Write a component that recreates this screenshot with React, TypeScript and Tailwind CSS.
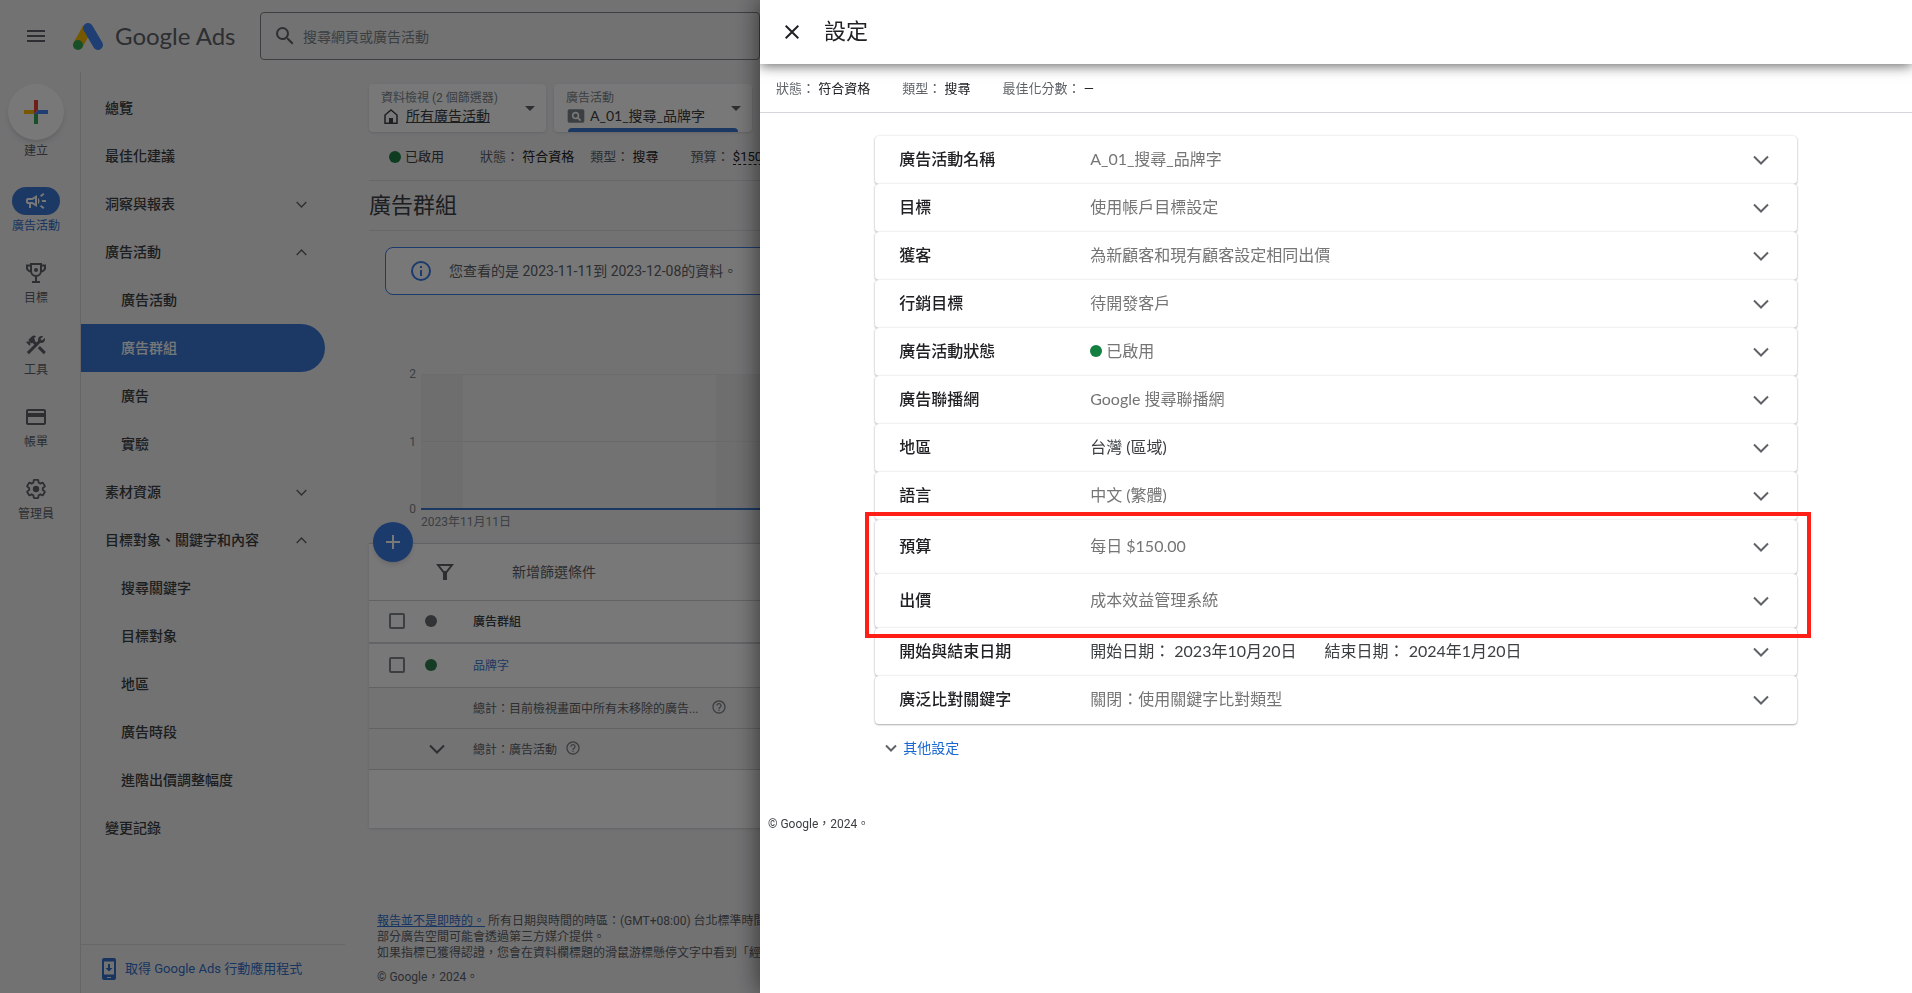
import { ReactNode } from 'react'
import {
    MdAdd,
    MdArrowDropDown,
    MdClose,
    MdConstruction,
    MdCreditCard,
    MdHelpOutline,
    MdMenu,
    MdOutlineCampaign,
    MdPageview,
    MdSearch
} from 'react-icons/md'

type NavItem = {
    label: string
    child?: boolean
    active?: boolean
    chevron?: 'up' | 'down'
}

const NAV: NavItem[] = [
    { label: '總覽' },
    { label: '最佳化建議' },
    { label: '洞察與報表', chevron: 'down' },
    { label: '廣告活動', chevron: 'up' },
    { label: '廣告活動', child: true },
    { label: '廣告群組', child: true, active: true },
    { label: '廣告', child: true },
    { label: '實驗', child: true },
    { label: '素材資源', chevron: 'down' },
    { label: '目標對象、關鍵字和內容', chevron: 'up' },
    { label: '搜尋關鍵字', child: true },
    { label: '目標對象', child: true },
    { label: '地區', child: true },
    { label: '廣告時段', child: true },
    { label: '進階出價調整幅度', child: true },
    { label: '變更記錄' }
]

type Setting = {
    label: string
    value: ReactNode
    dark?: boolean
}

const SETTINGS_TOP: Setting[] = [
    { label: '廣告活動名稱', value: 'A_01_搜尋_品牌字' },
    { label: '目標', value: '使用帳戶目標設定' },
    { label: '獲客', value: '為新顧客和現有顧客設定相同出價' },
    { label: '行銷目標', value: '待開發客戶' },
    {
        label: '廣告活動狀態',
        value: (
            <span className="flex items-center gap-1">
                <span className="size-3 rounded-full bg-[#137f41]" />
                已啟用
            </span>
        )
    },
    { label: '廣告聯播網', value: 'Google 搜尋聯播網' },
    { label: '地區', value: '台灣 (區域)', dark: true },
    { label: '語言', value: '中文 (繁體)' }
]

const SETTINGS_MARKED: Setting[] = [
    { label: '預算', value: '每日 $150.00' },
    { label: '出價', value: '成本效益管理系統' }
]

const SETTINGS_BOTTOM: Setting[] = [
    {
        label: '開始與結束日期',
        dark: true,
        value: (
            <span className="flex gap-7">
                <span>開始日期： 2023年10月20日</span>
                <span>結束日期： 2024年1月20日</span>
            </span>
        )
    },
    { label: '廣泛比對關鍵字', value: '關閉：使用關鍵字比對類型' }
]

function Chevron({ up = false, className = '' }: { up?: boolean, className?: string }) {
    return (
        <svg viewBox="0 0 16 10" fill="none" stroke="currentColor" strokeWidth="2" className={className}>
            <path d={up ? 'M1 8.5 8 1.5 15 8.5' : 'M1 1.5 8 8.5 15 1.5'} />
        </svg>
    )
}

function AdsLogo() {
    return (
        <svg viewBox="0 0 30 27" className="h-[27px] w-[30px]">
            <path d="M5 22 14.5 5" stroke="#fbbc04" strokeWidth="10" />
            <path d="M15 5 25 22" stroke="#4285f4" strokeWidth="10" strokeLinecap="round" />
            <circle cx="5" cy="22" r="5" fill="#34a853" />
        </svg>
    )
}

function TrophyIcon() {
    return (
        <svg viewBox="0 0 20 20" fill="none" stroke="currentColor" strokeWidth="2" className="size-5">
            <path d="M5 1h10v7a5 5 0 0 1-10 0zM5 2.500H1V4a4 4 0 0 0 4 4.500M15 2.500h4V4a4 4 0 0 1-4 4.500M10 13v6M6 19h8" />
            <circle cx="10" cy="7" r="2" fill="currentColor" stroke="none" />
        </svg>
    )
}

function SettingsIcon() {
    return (
        <svg viewBox="1 1 22 22" fill="none" stroke="currentColor" strokeWidth="2" className="size-5">
            <path d="M19.430 12.980c.04-.32.07-.64.07-.98s-.03-.66-.07-.98l2.110-1.650c.19-.15.24-.42.12-.64l-2-3.460c-.09-.16-.26-.25-.44-.25-.06 0-.12.01-.17.03l-2.490 1c-.52-.4-1.080-.73-1.690-.98l-.38-2.650C14.460 2.180 14.250 2 14 2h-4c-.25 0-.46.18-.49.42l-.38 2.650c-.61.25-1.170.59-1.690.98l-2.490-1c-.06-.02-.12-.03-.18-.03-.17 0-.34.09-.43.25l-2 3.460c-.13.22-.07.49.12.64l2.110 1.650c-.04.32-.07.65-.07.98s.03.66.07.98l-2.110 1.650c-.19.15-.24.42-.12.64l2 3.460c.09.16.26.25.44.25.06 0 .12-.01.17-.03l2.490-1c.52.4 1.080.73 1.690.98l.38 2.650c.03.24.24.42.49.42h4c.25 0 .46-.18.49-.42l.38-2.650c.61-.25 1.170-.59 1.690-.98l2.490 1c.06.02.12.03.18.03.17 0 .34-.09.43-.25l2-3.460c.12-.22.07-.49-.12-.64z" />
            <circle cx="12" cy="12" r="3.500" fill="currentColor" stroke="none" />
        </svg>
    )
}

function RailItem({ icon, label }: { icon: ReactNode, label: string }) {
    return (
        <a href="#" className="flex h-[72px] flex-col items-center text-[#5f6368]">
            <span className="flex h-7 items-center">{icon}</span>
            <span className="mt-[3px] text-xs leading-4">{label}</span>
        </a>
    )
}

function SideNav() {
    return (
        <nav className="flex w-[264px] shrink-0 flex-col">
            <ul className="pt-3">
                {NAV.map((item, i) => (
                    <li key={i}>
                        <a
                            href="#"
                            className={`flex h-12 w-[244px] items-center justify-between pr-[18px] text-sm font-medium ${item.child ? 'pl-10' : 'pl-6'
                                } ${item.active ? 'rounded-r-full bg-[#3b7ad4] text-white' : 'text-[#3c4043]'}`}
                        >
                            {item.label}
                            {item.chevron && <Chevron up={item.chevron === 'up'} className="h-[7px] w-[11px] text-[#5f6368]" />}
                        </a>
                    </li>
                ))}
            </ul>
            <a href="#" className="mt-auto flex h-[49px] items-center gap-[9px] border-t border-[#dadce0] pl-[21px] text-[13px] text-[#3470cc]">
                <svg viewBox="0 0 14 22" className="h-[22px] w-[14px]">
                    <rect width="14" height="22" rx="2" fill="currentColor" />
                    <path d="M2 3.500h10v13H2z" fill="#f2f2f5" />
                    <path d="M6 6h2v4h2.500L7 13.500 3.500 10H6z" fill="currentColor" />
                    <path d="M5 19h4v1H5z" fill="#f2f2f5" />
                </svg>
                取得 Google Ads 行動應用程式
            </a>
        </nav>
    )
}

function Scope() {
    return (
        <div className="flex gap-2">
            <button className="flex h-12 w-[177px] items-center justify-between rounded bg-white pr-1 pl-3 text-left shadow">
                <span className="text-xs leading-4 text-[#80868b]">
                    資料檢視 (2 個篩選器)
                    <span className="flex items-center gap-2 text-sm leading-5 text-[#3c4043]">
                        <svg viewBox="0 0 14 15" fill="none" stroke="currentColor" strokeWidth="1.500" className="ml-[3px] h-[15px] w-[14px]">
                            <path d="M1 14.200V6L7 1l6 5v8.200z" />
                            <path d="M5 9h4v5H5z" fill="currentColor" stroke="none" />
                        </svg>
                        <span className="underline">所有廣告活動</span>
                    </span>
                </span>
                <MdArrowDropDown className="size-6 text-[#5f6368]" />
            </button>
            <button className="relative flex h-12 w-[198px] items-center justify-between rounded bg-white pr-1 pl-3 text-left shadow">
                <span className="text-xs leading-4 text-[#80868b]">
                    廣告活動
                    <span className="flex items-center gap-1 text-sm leading-5 text-[#3c4043]">
                        <MdPageview className="size-5 text-[#80868b]" />
                        <span className="font-[Lato,'Noto_Sans_CJK_TC',sans-serif]">A_01_搜尋_品牌字</span>
                    </span>
                </span>
                <MdArrowDropDown className="size-6 text-[#5f6368]" />
                <span className="absolute bottom-0 left-[14px] h-1 w-[170px] rounded-t bg-[#3b78d2]" />
            </button>
        </div>
    )
}

function Chart() {
    return (
        <div className="mt-[71px] flex pl-8">
            <div className="flex h-[151px] w-5 flex-col justify-between pr-[5px] text-right text-xs leading-4 text-[#80868b]">
                <span>2</span>
                <span>1</span>
                <span>0</span>
            </div>
            <div className="flex-1 pt-2">
                <div className="flex h-[136px] flex-col border-t border-b-2 border-t-[#e6e6e9] border-b-[#3b78d2]">
                    <div className="flex flex-1">
                        <div className="w-[42px] bg-[#e9e9eb]" />
                        <div className="w-[253px]" />
                        <div className="w-[84px] bg-[#e9e9eb]" />
                    </div>
                    <div className="flex flex-1 border-t border-[#e0e0e4]">
                        <div className="w-[42px] bg-[#e9e9eb]" />
                        <div className="w-[253px]" />
                        <div className="w-[84px] bg-[#e9e9eb]" />
                    </div>
                </div>
                <p className="mt-1 text-xs leading-4 text-[#80868b]">2023年11月11日</p>
            </div>
        </div>
    )
}

function Check({ label }: { label: string }) {
    return (
        <input
            type="checkbox"
            aria-label={label}
            className="block size-4 appearance-none rounded-xs border-2 border-[#80868b]"
        />
    )
}

function GroupTable() {
    return (
        <section className="relative mt-[13px] h-[285px] border-t border-[#d0d1d6] bg-white shadow">
            <button aria-label="新增" className="absolute -top-[22px] left-1 flex size-10 items-center justify-center rounded-full bg-[#3b7ee6] text-white shadow-md">
                <MdAdd className="size-6" />
            </button>
            <div className="flex h-14 items-center pl-[67px] text-sm text-[#5f6368]">
                <svg viewBox="0 0 18 18" fill="none" stroke="currentColor" strokeWidth="2" className="size-[18px]">
                    <path d="M2 2h14l-5.500 7h-3z" />
                    <path d="M9 9v8" strokeWidth="4" />
                </svg>
                <button className="ml-[58px]">新增篩選條件</button>
            </div>
            <table className="w-full border-t border-[#d0d1d6] text-left text-xs text-[#3c4043]">
                <tbody>
                    <tr className="h-[42px] border-b-2 border-[#d5d5dd]">
                        <td className="w-[56px] pl-5"><Check label="全選" /></td>
                        <td className="w-12"><span className="block size-3 rounded-full bg-[#6b6e73]" /></td>
                        <th className="pt-0.5 font-medium">廣告群組</th>
                    </tr>
                    <tr className="h-[45px] border-b border-[#d0d1d6]">
                        <td className="pl-5"><Check label="品牌字" /></td>
                        <td><span className="block size-3 rounded-full bg-[#2f8050]" /></td>
                        <td className="pt-0.5"><a href="#" className="text-[#3b78d2]">品牌字</a></td>
                    </tr>
                    <tr className="h-[41px] border-b border-[#d0d1d6] bg-[#f4f4f5]">
                        <td />
                        <td />
                        <td className="pt-0.5">
                            <span className="flex items-center gap-3 text-[#5f6368]">
                                總計：目前檢視畫面中所有未移除的廣告...
                                <MdHelpOutline className="mb-1 size-4 text-[#80868b]" />
                            </span>
                        </td>
                    </tr>
                    <tr className="h-[41px] border-b border-[#d0d1d6] bg-[#f4f4f5]">
                        <td />
                        <td><Chevron className="ml-1 h-[10px] w-4 text-[#5f6368]" /></td>
                        <td className="pt-0.5">
                            <span className="flex items-center gap-2 text-[#5f6368]">
                                總計：廣告活動
                                <MdHelpOutline className="mb-1 size-4 text-[#80868b]" />
                            </span>
                        </td>
                    </tr>
                </tbody>
            </table>
        </section>
    )
}

function SettingRow({ item, tall = false }: { item: Setting, tall?: boolean }) {
    return (
        <button
            className={`relative flex w-full items-center rounded bg-white pr-7 pl-6 text-left text-base shadow-[0_1px_2px_rgba(0,0,0,0.3),0_0_2px_rgba(0,0,0,0.15)] ${tall ? 'h-[54px]' : 'h-12'
                }`}
        >
            <span className="w-[191px] shrink-0 pb-0.5 font-medium text-[#202124]">{item.label}</span>
            <span className={`flex-1 pb-0.5 ${item.dark ? 'text-[#3c4043]' : 'text-[#757575]'}`}>{item.value}</span>
            <Chevron className="h-[10px] w-4 text-[#5f6368]" />
        </button>
    )
}

function StatusItem({ name, value }: { name: string, value: ReactNode }) {
    return (
        <span className="text-[13px] leading-5 whitespace-nowrap text-[#202124]">
            <span className="text-[#5f6368]">{name}：</span> {value}
        </span>
    )
}

function SettingsPanel() {
    return (
        <aside className="fixed inset-y-0 right-0 left-[760px] overflow-hidden bg-white shadow-[0_0_24px_rgba(0,0,0,0.6)]">
            {/* HEADER */}
            <header className="relative flex h-16 items-center bg-white pl-5 shadow-[0_2px_12px_rgba(0,0,0,0.6)]">
                <button aria-label="關閉" className="text-[#202124]">
                    <MdClose className="size-6" />
                </button>
                <h2 className="ml-5 pb-0.5 text-[22px] text-[#202124]">設定</h2>
            </header>

            {/* STATUS */}
            <div className="flex h-[49px] items-center gap-8 border-b border-[#d5d6dc] pt-px pl-4">
                <StatusItem name="狀態" value="符合資格" />
                <StatusItem name="類型" value="搜尋" />
                <StatusItem name="最佳化分數" value="—" />
            </div>

            {/* SETTINGS */}
            <div className="mx-auto mt-[23px] w-4/5 font-[Lato,'Noto_Sans_CJK_TC',sans-serif]">
                {SETTINGS_TOP.map(item => <SettingRow key={item.label} item={item} />)}
                <div className="relative">
                    {SETTINGS_MARKED.map(item => <SettingRow key={item.label} item={item} tall />)}
                    <div className="pointer-events-none absolute -top-2 -right-[14px] -bottom-[10px] -left-[10px] z-10 border-4 border-[#ff1f16]" />
                </div>
                {SETTINGS_BOTTOM.map(item => <SettingRow key={item.label} item={item} />)}
                <button className="mt-3 ml-[10px] flex items-center gap-[6px] text-sm leading-6 text-[#1967d2]">
                    <svg viewBox="0 0 12 8" fill="none" stroke="currentColor" strokeWidth="2" className="h-2 w-3 text-[#5f6368]">
                        <path d="M1 1.500 6 6.500 11 1.500" />
                    </svg>
                    其他設定
                </button>
            </div>

            <p className="mt-14 pl-2 text-xs leading-4 text-[#3c4043]">© Google，2024。</p>
        </aside>
    )
}

export default function App() {
    return (
        <div lang="zh-TW" className="flex h-screen flex-col overflow-hidden bg-[#f2f2f5] font-[Roboto,'Noto_Sans_CJK_TC',sans-serif] text-[#3c4043]">

            {/* TOP BAR */}
            <header className="flex h-[72px] shrink-0 items-center pl-6">
                <button aria-label="選單" className="text-[#5f6368]">
                    <MdMenu className="size-6" />
                </button>
                <a href="#" className="ml-[25px] flex w-[187px] items-center gap-3 text-2xl text-[#5f6368]">
                    <AdsLogo />
                    <span className="font-[Lato,sans-serif]">Google Ads</span>
                </a>
                <label className="flex h-12 w-[500px] items-center rounded border border-[#80868b] pl-3">
                    <MdSearch className="size-6 text-[#5f6368]" />
                    <input
                        type="search"
                        aria-label="搜尋"
                        placeholder="搜尋網頁或廣告活動"
                        className="ml-[6px] flex-1 bg-transparent pt-0.5 text-sm outline-none placeholder:text-[#80868b]"
                    />
                </label>
            </header>

            <div className="flex min-h-0 flex-1">

                {/* RAIL */}
                <nav className="flex w-[81px] shrink-0 flex-col border-r border-[#d5d6dc] pt-3">
                    <div className="flex w-[72px] flex-col items-center text-xs text-[#5f6368]">
                        <button aria-label="建立" className="flex size-14 items-center justify-center rounded-full bg-white shadow-md">
                            <svg viewBox="0 0 24 24" className="size-6">
                                <path d="M10 0h4v10l-4 4z" fill="#ea4335" />
                                <path d="M0 10h10v4H0z" fill="#fbbc04" />
                                <path d="M10 14h4v10h-4z" fill="#34a853" />
                                <path d="M14 10h10v4H10z" fill="#4285f4" />
                            </svg>
                        </button>
                        <span className="mt-[3px] leading-4">建立</span>
                        <a href="#" className="mt-7 flex h-[72px] flex-col items-center text-[#3470cc]">
                            <span className="flex h-7 w-12 items-center justify-center rounded-full bg-[#3b7ad4] text-white">
                                <MdOutlineCampaign className="size-6" />
                            </span>
                            <span className="mt-[3px] leading-4">廣告活動</span>
                        </a>
                    </div>
                    <div className="w-[72px]">
                        <RailItem icon={<TrophyIcon />} label="目標" />
                        <RailItem icon={<MdConstruction className="size-6" />} label="工具" />
                        <RailItem icon={<MdCreditCard className="size-6" />} label="帳單" />
                        <RailItem icon={<SettingsIcon />} label="管理員" />
                    </div>
                </nav>

                <SideNav />

                {/* CONTENT */}
                <main className="ml-6 min-w-0 flex-1 pt-3">
                    <Scope />
                    <div className="flex h-[49px] items-center border-b border-[#dadce0] pt-px pl-5">
                        <span className="size-3 rounded-full bg-[#1e8044]" />
                        <span className="ml-1 w-[75px] text-[13px]">已啟用</span>
                        <StatusItem name="狀態" value="符合資格" />
                        <span className="w-4" />
                        <StatusItem name="類型" value="搜尋" />
                        <span className="w-8" />
                        <StatusItem name="預算" value={<span className="border-b border-dashed border-current">$150.00/天</span>} />
                    </div>
                    <h1 className="flex h-[50px] items-center border-b border-[#dadce0] text-[22px]">廣告群組</h1>
                    <div className="mt-4 ml-4 flex h-12 items-center rounded-lg border border-[#3b7ee6] bg-white pl-[25px] text-sm text-[#5f6368]">
                        <svg viewBox="0 0 20 20" className="size-5 text-[#3b7ee6]">
                            <circle cx="10" cy="10" r="9" fill="none" stroke="currentColor" strokeWidth="2" />
                            <path d="M9 5h2v2H9zM9 9h2v6H9z" fill="currentColor" />
                        </svg>
                        <span className="ml-[18px]">您查看的是 2023-11-11到 2023-12-08的資料。</span>
                    </div>
                    <Chart />
                    <GroupTable />
                    <footer className="mt-[85px] pl-2 text-xs leading-4 whitespace-nowrap text-[#5f6368]">
                        <p><a href="#" className="text-[#3470cc] underline">報告並不是即時的。</a> 所有日期與時間的時區：(GMT+08:00) 台北標準時間。</p>
                        <p>部分廣告空間可能會透過第三方媒介提供。</p>
                        <p>如果指標已獲得認證，您會在資料欄標題的滑鼠游標懸停文字中看到「經認證」字樣。</p>
                        <p className="mt-2">© Google，2024。</p>
                    </footer>
                </main>
            </div>

            {/* SCRIM */}
            <div className="fixed inset-0 bg-black/53" />
            <SettingsPanel />
        </div>
    )
}
